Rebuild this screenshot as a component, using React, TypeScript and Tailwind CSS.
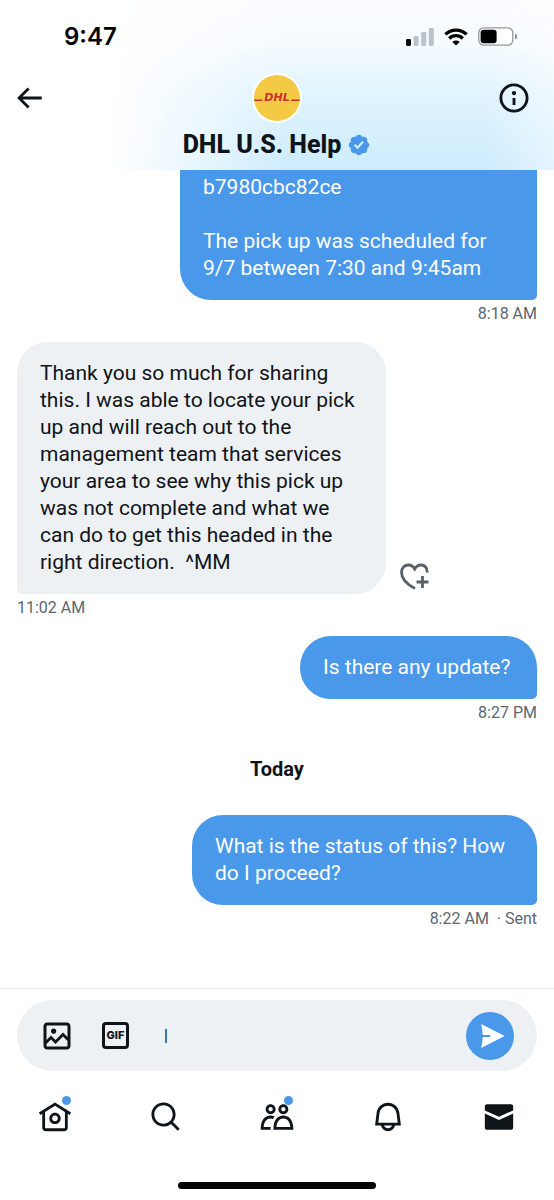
import type { ReactNode } from "react";

type IconProps = {
    d: string;
    className?: string;
};

const Icon = ({ d, className = "size-[34px]" }: IconProps) => (
    <svg viewBox="0 0 24 24" fill="currentColor" className={className} aria-hidden="true">
        <path d={d} />
    </svg>
);

const icons = {
    back: "M7.414 13l5.043 5.04-1.414 1.42L3.586 12l7.457-7.46 1.414 1.42L7.414 11H21v2H7.414z",
    info: "M13.5 8.5c0 .83-.67 1.5-1.5 1.5s-1.5-.67-1.5-1.5S11.17 7 12 7s1.5.67 1.5 1.5zM13 17v-5h-2v5h2zm-1 5.25c5.66 0 10.25-4.59 10.25-10.25S17.66 1.75 12 1.75 1.75 6.34 1.75 12 6.34 22.25 12 22.25zM20.25 12c0 4.56-3.69 8.25-8.25 8.25S3.75 16.56 3.75 12 7.44 3.75 12 3.75s8.25 3.69 8.25 8.25z",
    verified:
        "M22.25 12c0-1.43-.88-2.67-2.19-3.34.46-1.39.2-2.9-.81-3.91s-2.52-1.27-3.91-.81c-.66-1.31-1.91-2.19-3.34-2.19s-2.67.88-3.33 2.19c-1.4-.46-2.91-.2-3.92.81s-1.26 2.52-.8 3.91c-1.31.67-2.2 1.91-2.2 3.34s.89 2.67 2.2 3.34c-.46 1.39-.21 2.9.8 3.91s2.52 1.26 3.91.81c.67 1.31 1.91 2.19 3.34 2.19s2.68-.88 3.34-2.19c1.39.45 2.9.2 3.91-.81s1.27-2.52.81-3.91c1.31-.67 2.19-1.91 2.19-3.34zm-11.71 4.2L6.8 12.46l1.41-1.42 2.26 2.26 4.8-5.23 1.47 1.36-6.2 6.77z",
    image: "M3 5.5C3 4.119 4.119 3 5.5 3h13C19.881 3 21 4.119 21 5.5v13c0 1.381-1.119 2.5-2.5 2.5h-13C4.119 21 3 19.881 3 18.5v-13zM5.5 5c-.276 0-.5.224-.5.5v9.086l3-3 3 3 5-5 3 3V5.5c0-.276-.224-.5-.5-.5h-13zM19 15.414l-3-3-5 5-3-3-3 3V18.5c0 .276.224.5.5.5h13c.276 0 .5-.224.5-.5v-3.086zM9.75 7C8.784 7 8 7.784 8 8.75s.784 1.75 1.75 1.75 1.75-.784 1.75-1.75S10.716 7 9.75 7z",
    home: "M12 9c-2.209 0-4 1.791-4 4s1.791 4 4 4 4-1.791 4-4-1.791-4-4-4zm0 6c-1.105 0-2-.895-2-2s.895-2 2-2 2 .895 2 2-.895 2-2 2zm0-13.304L.622 8.807l1.06 1.696L3 9.679V19.5C3 20.881 4.119 22 5.5 22h13c1.381 0 2.5-1.119 2.5-2.5V9.679l1.318.824 1.06-1.696L12 1.696zM19 19.5c0 .276-.224.5-.5.5h-13c-.276 0-.5-.224-.5-.5V8.429l7-4.375 7 4.375V19.5z",
    search: "M10.25 3.75c-3.59 0-6.5 2.91-6.5 6.5s2.91 6.5 6.5 6.5c1.795 0 3.419-.726 4.596-1.904 1.178-1.177 1.904-2.801 1.904-4.596 0-3.59-2.91-6.5-6.5-6.5zm-8.5 6.5c0-4.694 3.806-8.5 8.5-8.5s8.5 3.806 8.5 8.5c0 1.986-.682 3.815-1.824 5.262l4.781 4.781-1.414 1.414-4.781-4.781c-1.447 1.142-3.276 1.824-5.262 1.824-4.694 0-8.5-3.806-8.5-8.5z",
    communities:
        "M7.501 19.917L7.471 21H.472l.029-1.027c.184-6.618 3.736-8.977 7-8.977.963 0 1.95.212 2.87.672-.444.478-.851 1.03-1.212 1.656-.507-.204-1.054-.329-1.658-.329-2.767 0-4.57 2.223-4.938 6.004H7.56c-.023.302-.05.599-.059.918zm15.998.056L23.528 21H9.472l.029-1.027c.184-6.618 3.736-8.977 7-8.977s6.816 2.358 7 8.977zM21.437 19c-.367-3.781-2.17-6.004-4.938-6.004s-4.57 2.223-4.938 6.004h9.875zm-4.938-9c-.799 0-1.527-.279-2.116-.73-.836-.64-1.384-1.638-1.384-2.77 0-1.93 1.567-3.5 3.5-3.5s3.5 1.57 3.5 3.5c0 1.132-.548 2.13-1.384 2.77-.589.451-1.317.73-2.116.73zm-1.5-3.5c0 .827.673 1.5 1.5 1.5s1.5-.673 1.5-1.5-.673-1.5-1.5-1.5-1.5.673-1.5 1.5zM7.5 3C9.433 3 11 4.57 11 6.5S9.433 10 7.5 10 4 8.43 4 6.5 5.567 3 7.5 3zm0 2C6.673 5 6 5.673 6 6.5S6.673 8 7.5 8 9 7.327 9 6.5 8.327 5 7.5 5z",
    bell: "M19.993 9.042C19.48 5.017 16.054 2 11.996 2s-7.49 3.021-7.999 7.051L2.866 18H7.1c.463 2.282 2.481 4 4.9 4s4.437-1.718 4.9-4h4.236l-1.143-8.958zM12 20c-1.306 0-2.417-.835-2.829-2h5.658c-.412 1.165-1.523 2-2.829 2zm-6.866-4l.847-6.698C6.364 6.272 8.941 4 11.996 4s5.627 2.268 6.013 5.295L18.864 16H5.134z",
    mail: "M1.998 4.499c0-.828.671-1.499 1.5-1.499h17c.828 0 1.5.671 1.5 1.499v2.858l-10 4.545-10-4.547V4.499zm0 5.053V19.5c0 .828.671 1.5 1.5 1.5h17c.828 0 1.5-.672 1.5-1.5V9.554l-10 4.545-10-4.547z",
};

const StatusBar = () => (
    <div className="flex h-[73px] items-center justify-between pr-9 pl-16">
        <span className="font-[Inter,sans-serif] text-2xl font-semibold text-black">9:47</span>
        <div className="flex items-center gap-2.5">
            <svg viewBox="0 0 28 18" className="h-[18px] w-7" aria-hidden="true">
                <rect x="0" y="11" width="5" height="7" rx="1.4" fill="#000" />
                <rect x="7.6" y="8" width="5" height="10" rx="1.4" fill="#bcc3c8" />
                <rect x="15.2" y="4" width="5" height="14" rx="1.4" fill="#bcc3c8" />
                <rect x="22.8" y="0" width="5" height="18" rx="1.4" fill="#bcc3c8" />
            </svg>
            <svg viewBox="0 0 24 18" className="h-[18px] w-6" fill="none" stroke="#000" aria-hidden="true">
                <path d="M1.4 6.4a15.2 15.2 0 0 1 21.2 0" strokeWidth="3.4" />
                <path d="M5.2 10.5a9.7 9.7 0 0 1 13.6 0" strokeWidth="3.2" />
                <path d="M12 17.6l-3.6-3.7a5.2 5.2 0 0 1 7.2 0z" fill="#000" stroke="none" />
            </svg>
            <svg viewBox="0 0 40 19" className="h-[19px] w-10" aria-hidden="true">
                <rect x=".8" y=".8" width="34" height="17.4" rx="5" fill="#fff" stroke="#93989c" strokeWidth="1.3" />
                <rect x="2.6" y="2.8" width="16" height="13.4" rx="3" fill="#000" />
                <path d="M37 6.4c1.8.6 2.2 1.8 2.2 3.1s-.4 2.5-2.2 3.1z" fill="#93989c" />
            </svg>
        </div>
    </div>
);

const Avatar = () => (
    <svg viewBox="0 0 50 50" className="size-[50px]" role="img" aria-label="DHL">
        <circle cx="25" cy="25" r="25" fill="#fff" />
        <circle cx="25" cy="25" r="23" fill="#f4ca45" />
        <g fill="#c5332b">
            <path d="M2.2 26.6h8.6l-.8 1.5H2.3zM39.7 26.6h8.1l-.1 1.5h-8.8z" />
            <text
                x="25"
                y="28.2"
                textAnchor="middle"
                className="font-['DejaVu_Sans',sans-serif] text-[11px] font-bold italic"
            >
                DHL
            </text>
        </g>
    </svg>
);

const Header = () => (
    <header className="h-[170px] shrink-0 bg-[linear-gradient(to_right,#ffffff_0%,#ffffff_20%,transparent_52%,transparent_88%,rgba(255,255,255,0.45)_100%),linear-gradient(to_bottom,#fbfcff_0%,#f5fbff_26%,#dff3fe_58%,#cdecfd_100%)]">
        <StatusBar />
        <div className="grid grid-cols-[1fr_auto_1fr] items-center px-3">
            <button type="button" aria-label="Back" className="justify-self-start">
                <Icon d={icons.back} />
            </button>
            <Avatar />
            <button type="button" aria-label="Conversation info" className="mr-[11px] justify-self-end">
                <Icon d={icons.info} />
            </button>
        </div>
        <div className="mt-1 flex items-center justify-center gap-1.5">
            <h1 className="text-[25px] leading-9 font-extrabold">DHL U.S. Help</h1>
            <Icon d={icons.verified} className="size-6 text-[#4a98ea]" />
        </div>
    </header>
);

type MessageProps = {
    time: string;
    sent?: boolean;
    bubbleClass?: string;
    action?: ReactNode;
    children: ReactNode;
};

const Message = ({ time, sent = false, bubbleClass = "py-[18px]", action, children }: MessageProps) => (
    <div className={sent ? "flex flex-col items-end" : "flex flex-col items-start"}>
        <div className="flex items-end gap-3">
            <div
                className={`px-[23px] text-[21px] leading-[27px] whitespace-pre-line ${bubbleClass} ${
                    sent
                        ? "rounded-[31px] rounded-br-[5px] bg-[#4a98ea] text-white"
                        : "rounded-[31px] rounded-bl-[5px] bg-[#edf1f3]"
                }`}
            >
                {children}
            </div>
            {action}
        </div>
        <time className="mt-1 text-base leading-5 whitespace-pre text-[#5c6670]">{time}</time>
    </div>
);

const ReactButton = () => (
    <button type="button" aria-label="Add reaction" className="text-[#56616c]">
        <svg viewBox="0 0 34 34" fill="none" stroke="currentColor" strokeWidth="2.8" className="size-[34px]" aria-hidden="true">
            <path d="M17 28.6C8.5 24 3.5 18 3.5 12.500 3.5 8 6.6 5 10.4 5c2.8 0 4.9 1.5 6.3 4 1.4-2.5 3.5-4 6.3-4 3.4 0 6.1 2.5 6.3 7.5" />
            <path d="M24.5 16v12M18.5 22h12" />
        </svg>
    </button>
);

const Composer = () => (
    <form className="mx-[17px] flex h-[71px] items-center rounded-full bg-[#edf1f3] pr-[23px] pl-[22px]">
        <button type="button" aria-label="Add photo">
            <Icon d={icons.image} className="size-9" />
        </button>
        <button
            type="button"
            aria-label="Add GIF"
            className="ml-[27px] flex size-[27px] items-center justify-center rounded-[4px] border-[3px] border-current font-[Inter,sans-serif] text-[11px] font-extrabold"
        >
            GIF
        </button>
        <input
            type="text"
            aria-label="Message"
            defaultValue="|"
            className="ml-[35px] min-w-0 flex-1 bg-transparent text-base outline-none"
        />
        <button
            type="submit"
            aria-label="Send"
            className="flex size-12 items-center justify-center rounded-full bg-[#4a98ea] pl-1.5 text-white"
        >
            <svg viewBox="0 0 24 24" fill="currentColor" className="size-6" aria-hidden="true">
                <path d="M.2 0 23.6 12 .2 24c.8-3.7 1.3-7.3 1.5-11.1H9v-1.800H1.7C1.5 7.3 1 3.7.2 0z" />
            </svg>
        </button>
    </form>
);

const tabs = [
    { label: "Home", d: icons.home, unread: true },
    { label: "Search", d: icons.search, unread: false },
    { label: "Communities", d: icons.communities, unread: true },
    { label: "Notifications", d: icons.bell, unread: false },
    { label: "Messages", d: icons.mail, unread: false },
];

const TabBar = () => (
    <nav className="grid h-[91px] grid-cols-5">
        {tabs.map((tab) => (
            <a key={tab.label} href="#" aria-label={tab.label} className="flex items-center justify-center">
                <span className="relative">
                    <Icon d={tab.d} />
                    {tab.unread && <span className="absolute -top-1 right-px size-[9px] rounded-full bg-[#4a98ea]" />}
                </span>
            </a>
        ))}
    </nav>
);

export default function App() {
    return (
        <div className="flex min-h-screen flex-col bg-white font-[Roboto,sans-serif] text-[#0f1419]">
            <Header />
            <main className="flex-1 px-[17px]">
                <Message sent time="8:18 AM" bubbleClass="w-[357px] rounded-t-none pt-1 pb-[18px]">
                    {"b7980cbc82ce\n\nThe pick up was scheduled for 9/7 between 7:30 and 9:45am"}
                </Message>
                <div className="mt-[18px]">
                    <Message time="11:02 AM" bubbleClass="w-[369px] py-[18px]" action={<ReactButton />}>
                        Thank you so much for sharing this. I was able to locate your pick up and will reach out to the
                        management team that services your area to see why this pick up was not complete and what we
                        can do to get this headed in the right direction.&nbsp; ^MM
                    </Message>
                </div>
                <div className="mt-[18px]">
                    <Message sent time="8:27 PM" bubbleClass="w-[237px] py-[18px]">
                        Is there any update?
                    </Message>
                </div>
                <h2 className="my-8 text-center text-xl leading-7 font-bold">Today</h2>
                <Message sent time="8:22 AM  · Sent" bubbleClass="w-[345px] py-[18px]">
                    What is the status of this? How do I proceed?
                </Message>
            </main>
            <footer className="border-t border-[#e3e7ea] pt-[11px]">
                <Composer />
                <TabBar />
                <div className="flex h-[38px] items-center justify-center pt-2">
                    <span className="h-[7px] w-[198px] rounded-full bg-black" />
                </div>
            </footer>
        </div>
    );
}
